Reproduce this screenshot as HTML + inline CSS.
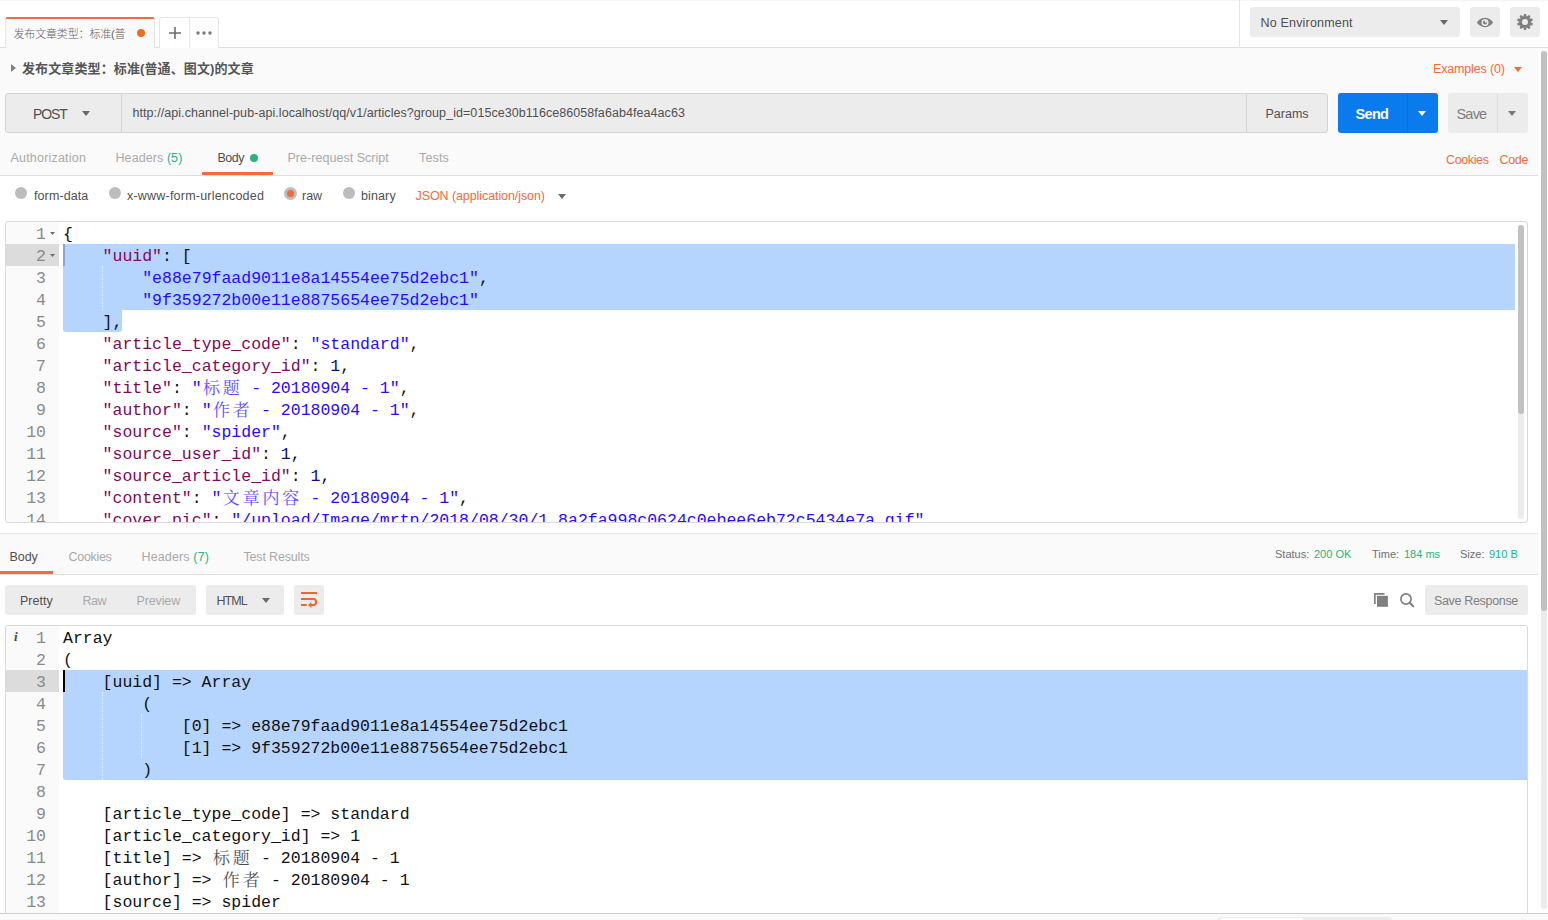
<!DOCTYPE html>
<html lang="zh-CN">
<head>
<meta charset="utf-8">
<title>Postman</title>
<style>
*{box-sizing:border-box;margin:0;padding:0}
html,body{width:1548px;height:920px;overflow:hidden;background:#fff}
body{position:relative;font-family:"Liberation Sans","Noto Sans CJK SC",sans-serif;font-size:13px;color:#505050}
.abs{position:absolute}
.t{position:absolute;white-space:nowrap;line-height:1}
.or{color:#f26b3a}
.gr{color:#26b47f}
.lt{color:#a9a9a9}
/* header */
#hdr{left:0;top:0;width:1548px;height:48px;background:#fff;border-bottom:1px solid #dedede}
#tab{left:5px;top:17px;width:150px;height:31px;background:#fafafa;border:1px solid #e6e6e6;border-bottom:none;border-top:2px solid #f26b3a;border-radius:3px 3px 0 0}
#plus{left:159px;top:17px;width:60px;height:31px;background:#fff;border:1px solid #e6e6e6;border-bottom:none;border-radius:3px 3px 0 0}
.btn{background:#ececec;border-radius:3px}
/* main bg */
#reqbg{left:0;top:48px;width:1538px;height:128px;background:#fafafa;border-bottom:1px solid #dedede}
#urlbar{left:5px;top:93px;width:1323px;height:40px;background:#ececec;border:1px solid #d4d4d4;border-radius:3px}
.radio{width:12px;height:12px;border-radius:50%;background:#bdbdbd}
/* editors */
.ed{background:#fff;border:1px solid #d9d9d9;border-radius:3px;overflow:hidden}
.gut{left:0;top:0;width:53px;bottom:0;background:#fafafa}
.code{font-family:"Liberation Mono","Noto Serif CJK SC",monospace;font-size:16.5px;line-height:26px;white-space:pre;color:#111}
.ln{position:absolute;left:0;width:40px;text-align:right;color:#8a8a8a;height:22px}
.row{position:absolute;left:57px;height:22px}
.sel{position:absolute;background:#b5d5ff}
.k{color:#7f0a58}
.s{color:#2a0aff}
.n{color:#0a0a8a}
.cj{display:inline-block;width:19.8px;text-align:center;font-family:"Noto Serif CJK SC",serif;font-size:17px;line-height:26px;vertical-align:top;opacity:.75;position:relative;top:-2px}
/*FIT*/
#tabtxt{left:13.50px !important;letter-spacing:-0.160px;font-size:11px !important}
#envtxt{left:1260.50px !important;letter-spacing:0.185px;font-size:12.5px !important}
#reqname{left:22.00px !important;letter-spacing:0.111px;font-size:13px !important}
#examples{left:1433.00px !important;letter-spacing:-0.164px;font-size:12.5px !important}
#post{left:33.00px !important;letter-spacing:-1.067px;font-size:14px !important}
#url{left:132.50px !important;letter-spacing:0.065px;font-size:12.5px !important}
#params{left:1265.50px !important;letter-spacing:0.000px;font-size:12.5px !important}
#send{left:1355.50px !important;letter-spacing:-0.667px;font-size:14.5px !important}
#save{left:1456.50px !important;letter-spacing:-0.800px;font-size:14.5px !important}
#tAuth{left:10.50px !important;letter-spacing:0.200px;font-size:12.5px !important}
#tHead{left:115.50px !important;letter-spacing:0.080px;font-size:12.5px !important}
#tBody{left:217.50px !important;letter-spacing:-0.533px;font-size:12.5px !important}
#tPre{left:287.50px !important;letter-spacing:0.035px;font-size:12.5px !important}
#tTests{left:419.00px !important;letter-spacing:0.150px;font-size:12.5px !important}
#cookies{left:1446.00px !important;letter-spacing:-0.367px;font-size:12.5px !important}
#codel{left:1499.50px !important;letter-spacing:-0.333px;font-size:12.5px !important}
#r1{left:34.00px !important;letter-spacing:0.100px;font-size:12.5px !important}
#r2{left:127.00px !important;letter-spacing:0.210px;font-size:12.5px !important}
#r3{left:302.00px !important;letter-spacing:0.000px;font-size:12.5px !important}
#r4{left:361.00px !important;letter-spacing:0.120px;font-size:12.5px !important}
#jsont{left:415.50px !important;letter-spacing:-0.082px;font-size:12.5px !important}
#rBody{left:9.50px !important;letter-spacing:-0.067px;font-size:12.5px !important}
#rCook{left:68.50px !important;letter-spacing:-0.300px;font-size:12.5px !important}
#rHead{left:141.50px !important;letter-spacing:0.140px;font-size:12.5px !important}
#rTest{left:243.50px !important;letter-spacing:-0.164px;font-size:12.5px !important}
#pretty{left:20.00px !important;letter-spacing:0.000px;font-size:12.5px !important}
#raw{left:82.50px !important;letter-spacing:-0.500px;font-size:12.5px !important}
#preview{left:136.50px !important;letter-spacing:-0.133px;font-size:12.5px !important}
#htmlt{left:216.50px !important;letter-spacing:-0.933px;font-size:12.5px !important}
#saveresp{left:1434.00px !important;letter-spacing:-0.333px;font-size:12.5px !important}
/*ENDFIT*/
</style>
</head>
<body>
<!-- HEADER -->
<div id="hdr" class="abs"></div>
<div class="abs" style="left:0;top:0;width:1548px;height:1px;background:#f4f4f4"></div>
<div id="tab" class="abs"></div>
<div class="t" id="tabtxt" style="left:13px;top:29px;font-size:11px;color:#606060;font-weight:300;font-family:'Liberation Sans','Noto Sans CJK SC',sans-serif">发布文章类型：标准(普</div>
<div class="abs" style="left:137px;top:29px;width:8px;height:8px;border-radius:50%;background:#f26b22"></div>
<div id="plus" class="abs"></div>
<div class="abs" style="left:189px;top:18px;width:1px;height:30px;background:#e6e6e6"></div>
<svg class="abs" style="left:168px;top:26px" width="14" height="14" viewBox="0 0 14 14"><path d="M7 1v12M1 7h12" stroke="#6e6e6e" stroke-width="1.6" fill="none"/></svg>
<svg class="abs" style="left:195px;top:30px" width="18" height="6" viewBox="0 0 18 6"><circle cx="3" cy="3" r="1.7" fill="#7a7a7a"/><circle cx="9" cy="3" r="1.7" fill="#7a7a7a"/><circle cx="15" cy="3" r="1.7" fill="#7a7a7a"/></svg>
<div class="abs" style="left:1239px;top:0;width:1px;height:48px;background:#e6e6e6"></div>
<div class="abs btn" style="left:1250px;top:7px;width:210px;height:30px"></div>
<div class="t" id="envtxt" style="left:1261px;top:17px;font-size:13px;color:#505050">No Environment</div>
<svg class="abs" style="left:1440px;top:20px" width="8" height="5" viewBox="0 0 8 5"><path d="M0 0h8L4 5z" fill="#6a6a6a"/></svg>
<div class="abs btn" style="left:1470px;top:7px;width:30px;height:30px"></div>
<div class="abs btn" style="left:1510px;top:7px;width:30px;height:30px"></div>
<svg class="abs" id="eye" style="left:1475px;top:16px" width="20" height="13" viewBox="-10 -6.500 20 13"><path d="M-8.200 0C-5.500 -3.400 -2.800 -4.700 0 -4.700S5.500 -3.400 8.200 0C5.500 3.400 2.800 4.700 0 4.700S-5.500 3.400 -8.200 0z" fill="#808080"/><circle cx="0" cy="0" r="3.500" fill="#ececec"/><circle cx="0" cy="0" r="2.050" fill="#808080"/><circle cx="0.900" cy="-0.900" r="1.150" fill="#ececec"/></svg>
<svg class="abs" id="gear" style="left:1515px;top:12px" width="20" height="20" viewBox="-10 -10 20 20"><path d="M-1.75 -5.20 L-0.95 -8.00 L0.95 -8.00 L1.75 -5.20 L1.64 -5.24 L3.93 -7.03 L5.47 -5.91 L4.47 -3.18 L4.40 -3.27 L7.31 -3.38 L7.90 -1.57 L5.49 0.06 L5.49 -0.06 L7.90 1.57 L7.31 3.38 L4.40 3.27 L4.47 3.18 L5.47 5.91 L3.93 7.03 L1.64 5.24 L1.75 5.20 L0.95 8.00 L-0.95 8.00 L-1.75 5.20 L-1.64 5.24 L-3.93 7.03 L-5.47 5.91 L-4.47 3.18 L-4.40 3.27 L-7.31 3.38 L-7.90 1.57 L-5.49 -0.06 L-5.49 0.06 L-7.90 -1.57 L-7.31 -3.38 L-4.40 -3.27 L-4.47 -3.18 L-5.47 -5.91 L-3.93 -7.03 L-1.64 -5.24Z" fill="#808080"/><circle cx="0" cy="0" r="5.500" fill="#808080"/><circle cx="0" cy="0" r="3" fill="#ececec"/></svg>

<!-- REQUEST AREA -->
<div id="reqbg" class="abs"></div>
<svg class="abs" style="left:11px;top:64px" width="5" height="8" viewBox="0 0 5 8"><path d="M0 0L5 4 0 8z" fill="#808080"/></svg>
<div class="t" id="reqname" style="left:21px;top:62px;font-size:13px;font-weight:bold;color:#555;font-family:'Liberation Sans','Noto Sans CJK SC',sans-serif">发布文章类型：标准(普通、图文)的文章</div>
<div class="t or" id="examples" style="left:1433px;top:63px;font-size:13px">Examples (0)</div>
<svg class="abs" style="left:1514px;top:67px" width="8" height="5" viewBox="0 0 8 5"><path d="M0 0h8L4 5z" fill="#f26b3a"/></svg>
<div id="urlbar" class="abs"></div>
<div class="abs" style="left:121px;top:94px;width:1px;height:38px;background:#d4d4d4"></div>
<div class="abs" style="left:1246px;top:94px;width:1px;height:38px;background:#d4d4d4"></div>
<div class="t" id="post" style="left:33px;top:107px;font-size:15px;color:#505050">POST</div>
<svg class="abs" style="left:82px;top:111px" width="8" height="5" viewBox="0 0 8 5"><path d="M0 0h8L4 5z" fill="#6a6a6a"/></svg>
<div class="t" id="url" style="left:133px;top:107px;font-size:12.500px;color:#505050">http://api.channel-pub-api.localhost/qq/v1/articles?group_id=015ce30b116ce86058fa6ab4fea4ac63</div>
<div class="t" id="params" style="left:1266px;top:108px;font-size:13px;color:#505050">Params</div>
<div class="abs" style="left:1338px;top:93px;width:100px;height:40px;background:#097bed;border-radius:3px"></div>
<div class="abs" style="left:1407px;top:93px;width:1px;height:40px;background:#0a6fd4"></div>
<div class="t" id="send" style="left:1355px;top:107px;font-size:15.500px;font-weight:bold;color:#fff">Send</div>
<svg class="abs" style="left:1418px;top:111px" width="8" height="5" viewBox="0 0 8 5"><path d="M0 0h8L4 5z" fill="#fff"/></svg>
<div class="abs btn" style="left:1448px;top:93px;width:80px;height:40px"></div>
<div class="abs" style="left:1497px;top:93px;width:1px;height:40px;background:#dedede"></div>
<div class="t" id="save" style="left:1457px;top:107px;font-size:15.500px;color:#808080">Save</div>
<svg class="abs" style="left:1508px;top:111px" width="8" height="5" viewBox="0 0 8 5"><path d="M0 0h8L4 5z" fill="#7a7a7a"/></svg>
<!-- tabs -->
<div class="t lt" id="tAuth" style="left:10px;top:152px;font-size:13px">Authorization</div>
<div class="t lt" id="tHead" style="left:116px;top:152px;font-size:13px">Headers <span class="gr">(5)</span></div>
<div class="t" id="tBody" style="left:217px;top:152px;font-size:13px;color:#505050">Body</div>
<div class="abs" style="left:250px;top:154px;width:8px;height:8px;border-radius:50%;background:#26b47f"></div>
<div class="abs" style="left:202px;top:172px;width:71px;height:3px;background:#f26b3a"></div>
<div class="t lt" id="tPre" style="left:288px;top:152px;font-size:13px">Pre-request Script</div>
<div class="t lt" id="tTests" style="left:419px;top:152px;font-size:13px">Tests</div>
<div class="t or" id="cookies" style="left:1445px;top:154px;font-size:13px">Cookies</div>
<div class="t or" id="codel" style="left:1499px;top:154px;font-size:13px">Code</div>
<!-- radios -->
<div class="abs radio" style="left:15px;top:187px"></div>
<div class="t" id="r1" style="left:33px;top:190px;font-size:13px">form-data</div>
<div class="abs radio" style="left:109px;top:187px"></div>
<div class="t" id="r2" style="left:127px;top:190px;font-size:13px">x-www-form-urlencoded</div>
<div class="abs radio" style="left:284px;top:187px;width:13px;height:13px"></div>
<div class="abs" style="left:287px;top:190px;width:7px;height:7px;border-radius:50%;background:#f26b3a"></div>
<div class="t" id="r3" style="left:302px;top:190px;font-size:13px">raw</div>
<div class="abs radio" style="left:343px;top:187px"></div>
<div class="t" id="r4" style="left:361px;top:190px;font-size:13px">binary</div>
<div class="t or" id="jsont" style="left:416px;top:190px;font-size:13px">JSON (application/json)</div>
<svg class="abs" style="left:558px;top:194px" width="8" height="5" viewBox="0 0 8 5"><path d="M0 0h8L4 5z" fill="#6a6a6a"/></svg>

<!-- REQUEST EDITOR -->
<div id="ed1" class="abs ed" style="left:5px;top:221px;width:1523px;height:302px">
<div class="abs gut"></div>
<div class="abs" style="left:0;top:22px;width:53px;height:22px;background:#dcdcdc"></div>
<div class="sel" style="left:57px;top:22px;width:1452px;height:66px;border-radius:3px 0 0 0"></div>
<div class="sel" style="left:57px;top:88px;width:59px;height:22px;border-radius:0 0 3px 3px"></div>
<div class="abs" style="left:96px;top:44px;width:0;height:44px;border-left:1px dotted #e8f1ff"></div>
<div class="abs" style="left:57px;top:22px;width:2px;height:22px;background:#8aa6cc"></div>
<div class="ln code" style="top:0px">1</div>
<div class="row code" style="top:0px">{</div>
<div class="ln code" style="top:22px">2</div>
<div class="row code" style="top:22px">    <span class="k">"uuid"</span>: [</div>
<div class="ln code" style="top:44px">3</div>
<div class="row code" style="top:44px">        <span class="s">"e88e79faad9011e8a14554ee75d2ebc1"</span>,</div>
<div class="ln code" style="top:66px">4</div>
<div class="row code" style="top:66px">        <span class="s">"9f359272b00e11e8875654ee75d2ebc1"</span></div>
<div class="ln code" style="top:88px">5</div>
<div class="row code" style="top:88px">    ],</div>
<div class="ln code" style="top:110px">6</div>
<div class="row code" style="top:110px">    <span class="k">"article_type_code"</span>: <span class="s">"standard"</span>,</div>
<div class="ln code" style="top:132px">7</div>
<div class="row code" style="top:132px">    <span class="k">"article_category_id"</span>: <span class="n">1</span>,</div>
<div class="ln code" style="top:154px">8</div>
<div class="row code" style="top:154px">    <span class="k">"title"</span>: <span class="s">"<span class="cj">标</span><span class="cj">题</span> - 20180904 - 1"</span>,</div>
<div class="ln code" style="top:176px">9</div>
<div class="row code" style="top:176px">    <span class="k">"author"</span>: <span class="s">"<span class="cj">作</span><span class="cj">者</span> - 20180904 - 1"</span>,</div>
<div class="ln code" style="top:198px">10</div>
<div class="row code" style="top:198px">    <span class="k">"source"</span>: <span class="s">"spider"</span>,</div>
<div class="ln code" style="top:220px">11</div>
<div class="row code" style="top:220px">    <span class="k">"source_user_id"</span>: <span class="n">1</span>,</div>
<div class="ln code" style="top:242px">12</div>
<div class="row code" style="top:242px">    <span class="k">"source_article_id"</span>: <span class="n">1</span>,</div>
<div class="ln code" style="top:264px">13</div>
<div class="row code" style="top:264px">    <span class="k">"content"</span>: <span class="s">"<span class="cj">文</span><span class="cj">章</span><span class="cj">内</span><span class="cj">容</span> - 20180904 - 1"</span>,</div>
<div class="ln code" style="top:286px">14</div>
<div class="row code" style="top:286px">    <span class="k">"cover_pic"</span>: <span class="s">"/upload/Image/mrtp/2018/08/30/1_8a2fa998c0624c0ebee6eb72c5434e7a.gif"</span></div>
<svg class="abs" style="left:44px;top:10px" width="5" height="3" viewBox="0 0 5 3"><path d="M0 0h5L2.500 3z" fill="#6e6e6e"/></svg>
<svg class="abs" style="left:44px;top:32px" width="5" height="3" viewBox="0 0 5 3"><path d="M0 0h5L2.500 3z" fill="#6e6e6e"/></svg>
<div class="abs" style="left:1512px;top:3px;width:6px;height:294px;background:#ececec;border-radius:3px"></div>
<div class="abs" style="left:1512px;top:3px;width:6px;height:189px;background:#c1c1c1;border-radius:3px"></div>
</div>

<!-- RESPONSE -->
<div id="resphead" class="abs" style="left:0;top:533px;width:1538px;height:42px;background:#fafafa;border-top:1px solid #e6e6e6;border-bottom:1px solid #dedede"></div>

<div class="t" id="rBody" style="left:10px;top:551px;font-size:13px;color:#505050">Body</div>
<div class="abs" style="left:0;top:571px;width:53px;height:3px;background:#f26b3a"></div>
<div class="t lt" id="rCook" style="left:68px;top:551px;font-size:13px">Cookies</div>
<div class="t lt" id="rHead" style="left:142px;top:551px;font-size:13px">Headers <span class="gr">(7)</span></div>
<div class="t lt" id="rTest" style="left:243px;top:551px;font-size:13px">Test Results</div>
<div class="t" id="stat" style="left:1275px;top:549px;font-size:11px;color:#707070">Status:</div>
<div class="t gr" id="statv" style="left:1314px;top:549px;font-size:11px">200 OK</div>
<div class="t" id="time" style="left:1372px;top:549px;font-size:11px;color:#707070">Time:</div>
<div class="t gr" id="timev" style="left:1404px;top:549px;font-size:11px">184 ms</div>
<div class="t" id="size" style="left:1460px;top:549px;font-size:11px;color:#707070">Size:</div>
<div class="t gr" id="sizev" style="left:1489px;top:549px;font-size:11px">910 B</div>
<!-- toolbar -->
<div class="abs btn" style="left:5px;top:585px;width:191px;height:30px"></div>
<div class="t" id="pretty" style="left:20px;top:595px;font-size:13px;color:#505050">Pretty</div>
<div class="t lt" id="raw" style="left:83px;top:595px;font-size:13px">Raw</div>
<div class="t lt" id="preview" style="left:137px;top:595px;font-size:13px">Preview</div>
<div class="abs btn" style="left:206px;top:585px;width:78px;height:30px"></div>
<div class="t" id="htmlt" style="left:216px;top:595px;font-size:13px;color:#505050">HTML</div>
<svg class="abs" style="left:262px;top:598px" width="8" height="5" viewBox="0 0 8 5"><path d="M0 0h8L4 5z" fill="#6a6a6a"/></svg>
<div class="abs btn" style="left:294px;top:585px;width:30px;height:30px"></div>
<svg class="abs" id="wrapi" style="left:301px;top:592px" width="17" height="17" viewBox="0 0 17 17"><path d="M0 1H16M0 7H12.100a3 3 0 0 1 0 6H10M0 13H5.700" stroke="#f26531" stroke-width="2" fill="none"/><path d="M7 13L10.400 10.100V15.900z" fill="#f26531"/></svg>
<svg class="abs" id="copyi" style="left:1373px;top:592px" width="16" height="16" viewBox="0 0 16 16"><path d="M1 1H11.500V2.700H2.700V12H1z" fill="#808080"/><rect x="4" y="3.800" width="10.900" height="11" fill="#808080"/></svg>
<svg class="abs" id="searchi" style="left:1399px;top:592px" width="16" height="16" viewBox="0 0 16 16"><circle cx="7" cy="7" r="5.100" stroke="#808080" stroke-width="1.700" fill="none"/><path d="M10.800 10.800L14.200 14.200" stroke="#808080" stroke-width="2.100" stroke-linecap="round"/></svg>
<div class="abs btn" style="left:1425px;top:585px;width:103px;height:30px"></div>
<div class="t" id="saveresp" style="left:1434px;top:595px;font-size:13px;color:#808080">Save Response</div>
<div id="ed2" class="abs ed" style="left:5px;top:625px;width:1523px;height:300px">
<div class="abs gut"></div>
<div class="abs" style="left:0;top:44px;width:53px;height:22px;background:#dcdcdc"></div>
<div class="sel" style="left:57px;top:44px;width:1470px;height:110px;border-radius:0 0 0 3px"></div>
<div class="abs" style="left:96px;top:66px;width:0;height:88px;border-left:1px dotted #e8f1ff"></div>
<div class="abs" style="left:135px;top:88px;width:0;height:44px;border-left:1px dotted #e8f1ff"></div>
<div class="abs" style="left:57px;top:44px;width:2px;height:22px;background:#000"></div>
<div class="t" style="left:8px;top:4px;font-family:'Liberation Serif',serif;font-style:italic;font-weight:bold;font-size:13px;color:#444">i</div>
<div class="ln code" style="top:0px">1</div>
<div class="row code" style="top:0px">Array</div>
<div class="ln code" style="top:22px">2</div>
<div class="row code" style="top:22px">(</div>
<div class="ln code" style="top:44px">3</div>
<div class="row code" style="top:44px">    [uuid] =&gt; Array</div>
<div class="ln code" style="top:66px">4</div>
<div class="row code" style="top:66px">        (</div>
<div class="ln code" style="top:88px">5</div>
<div class="row code" style="top:88px">            [0] =&gt; e88e79faad9011e8a14554ee75d2ebc1</div>
<div class="ln code" style="top:110px">6</div>
<div class="row code" style="top:110px">            [1] =&gt; 9f359272b00e11e8875654ee75d2ebc1</div>
<div class="ln code" style="top:132px">7</div>
<div class="row code" style="top:132px">        )</div>
<div class="ln code" style="top:154px">8</div>
<div class="ln code" style="top:176px">9</div>
<div class="row code" style="top:176px">    [article_type_code] =&gt; standard</div>
<div class="ln code" style="top:198px">10</div>
<div class="row code" style="top:198px">    [article_category_id] =&gt; 1</div>
<div class="ln code" style="top:220px">11</div>
<div class="row code" style="top:220px">    [title] =&gt; <span class="cj">标</span><span class="cj">题</span> - 20180904 - 1</div>
<div class="ln code" style="top:242px">12</div>
<div class="row code" style="top:242px">    [author] =&gt; <span class="cj">作</span><span class="cj">者</span> - 20180904 - 1</div>
<div class="ln code" style="top:264px">13</div>
<div class="row code" style="top:264px">    [source] =&gt; spider</div>
<div class="ln code" style="top:286px">14</div>
<div class="row code" style="top:286px">    [source_user_id] =&gt; 1</div>
</div>

<div class="abs" style="left:1541px;top:51px;width:6px;height:858px;background:#ececec;border-radius:3px"></div>
<div class="abs" style="left:1541px;top:51px;width:6px;height:560px;background:#c1c1c1;border-radius:3px"></div>
<!-- FOOTER -->
<div id="foot" class="abs" style="left:0;top:913px;width:1548px;height:7px;background:#fafafa;border-top:1px solid #d0d0d0"></div>
<div class="abs" style="left:1218px;top:917px;width:174px;height:6px;background:#ececec;border-radius:3px 3px 0 0"></div>
<div class="abs" style="left:1220px;top:918px;width:84px;height:5px;background:#fff;border-radius:3px 3px 0 0"></div>
</body>
</html>
